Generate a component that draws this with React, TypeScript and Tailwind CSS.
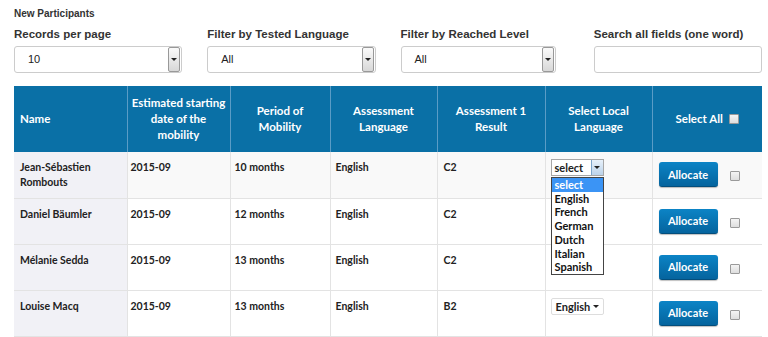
import React from "react";

const rows = [
  { name: "Jean-Sébastien Rombouts", date: "2015-09", period: "10 months", lang: "English", result: "C2", local: "open" },
  { name: "Daniel Bäumler", date: "2015-09", period: "12 months", lang: "English", result: "C2", local: "" },
  { name: "Mélanie Sedda", date: "2015-09", period: "13 months", lang: "English", result: "C2", local: "" },
  { name: "Louise Macq", date: "2015-09", period: "13 months", lang: "English", result: "B2", local: "English" },
];

const options = ["select", "English", "French", "German", "Dutch", "Italian", "Spanish"];

const FilterSelect = ({ value, className = "" }: { value: string; className?: string }) => (
  <div className={`h-[27px] bg-white border border-[#ccc] rounded-[3px] flex items-center pl-[13px] pr-[1px] ${className}`}>
    <span className="flex-1 text-[11px] text-[#222]">{value}</span>
    <span className="w-[12px] h-[25px] border border-[#999] rounded-[2px] bg-gradient-to-b from-[#fafafa] to-[#d8d8d8] flex items-center justify-center">
      <span className="w-0 h-0 border-l-[3px] border-r-[3px] border-t-[3px] border-l-transparent border-r-transparent border-t-[#222]" />
    </span>
  </div>
);

const Checkbox = () => (
  <span className="inline-block w-[10px] h-[10px] border border-[#9a9a9a] bg-gradient-to-b from-[#f4f4f4] to-[#dedede] rounded-[1px]" />
);

export default function App() {
  return (
    <div className="w-[768px] h-[337px] overflow-hidden bg-white pl-[14px] pr-[6px] pt-[8px]" style={{ fontFamily: "'Liberation Sans', Arial, sans-serif" }}>
      <div className="text-[10px] font-bold text-[#333] leading-[12px]">New Participants</div>
      <div className="grid grid-cols-4 gap-x-[25px] mt-[7px]">
        <div>
          <div className="text-[11.5px] font-bold text-[#333] leading-[14px]">Records per page</div>
          <FilterSelect value="10" className="mt-[5px]" />
        </div>
        <div>
          <div className="text-[11.5px] font-bold text-[#333] leading-[14px]">Filter by Tested Language</div>
          <FilterSelect value="All" className="mt-[5px]" />
        </div>
        <div>
          <div className="text-[11.5px] font-bold text-[#333] leading-[14px]">Filter by Reached Level</div>
          <FilterSelect value="All" className="mt-[5px] w-[155px]" />
        </div>
        <div>
          <div className="text-[11.5px] font-bold text-[#333] leading-[14px]">Search all fields (one word)</div>
          <div className="mt-[5px] h-[27px] bg-white border border-[#ccc] rounded-[3px]" />
        </div>
      </div>

      <table className="mt-[13px] w-[748px] table-fixed border-collapse text-[#222]" style={{ fontFamily: "Lato, 'Open Sans', sans-serif" }}>
        <colgroup>
          <col className="w-[113px]" />
          <col className="w-[103px]" />
          <col className="w-[100px]" />
          <col className="w-[107px]" />
          <col className="w-[108px]" />
          <col className="w-[107px]" />
          <col className="w-[110px]" />
        </colgroup>
        <thead>
          <tr className="h-[66px] bg-[#0a70a6] text-white text-[11.5px] font-bold leading-[16px]">
            <th className="text-left pl-[6px] border-r border-[#5a9cc6]">Name</th>
            <th className="border-r border-[#5a9cc6] px-[1px]">Estimated starting<br />date of the<br />mobility</th>
            <th className="border-r border-[#5a9cc6] px-[8px]">Period of<br />Mobility</th>
            <th className="border-r border-[#5a9cc6] px-[10px]">Assessment<br />Language</th>
            <th className="border-r border-[#5a9cc6] px-[8px]">Assessment 1<br />Result</th>
            <th className="border-r border-[#5a9cc6] px-[8px]">Select Local<br />Language</th>
            <th>
              <span className="inline-flex items-center gap-[6px]">
                Select All <Checkbox />
              </span>
            </th>
          </tr>
        </thead>
        <tbody className="text-[10.5px] font-bold leading-[15px]">
          {rows.map((r, i) => (
            <tr key={i} className={`h-[46px] border-b border-[#e3e3e3] align-top ${i === 0 ? "bg-[#f9f9f9]" : "bg-white"}`}>
              <td className="bg-[#f1f1f6] pl-[6px] pr-[10px] pt-[8px] border-r border-[#e3e3e3]">{r.name}</td>
              <td className="pl-[3px] pt-[8px] border-r border-[#e3e3e3]">{r.date}</td>
              <td className="pl-[4px] pt-[8px] border-r border-[#e3e3e3]">{r.period}</td>
              <td className="pl-[5px] pt-[8px] border-r border-[#e3e3e3]">{r.lang}</td>
              <td className="pl-[6px] pt-[8px] border-r border-[#e3e3e3]">{r.result}</td>
              <td className="pl-[5px] pt-[7px] border-r border-[#e3e3e3] relative">
                {r.local === "open" && (
                  <div className="relative w-[53px]">
                    <div className="h-[17px] bg-white border border-[#a7a7a7] flex items-center pl-[3px] text-[11px]">
                      <span className="flex-1">select</span>
                      <span className="w-[12px] h-[15px] border-l border-[#7ea6cc] bg-gradient-to-b from-[#e8f1fa] to-[#bcd3ea] flex items-center justify-center">
                        <span className="w-0 h-0 border-l-[3px] border-r-[3px] border-t-[3px] border-l-transparent border-r-transparent border-t-[#222]" />
                      </span>
                    </div>
                    <div className="absolute left-0 top-[18px] w-[53px] bg-white border border-[#444] z-10 text-[11px] leading-[13.7px]">
                      {options.map((o, j) => (
                        <div key={o} className={`pl-[3px] ${j === 0 ? "bg-[#3b94f5] text-white" : "text-[#111]"}`}>{o}</div>
                      ))}
                    </div>
                  </div>
                )}
                {r.local === "English" && (
                  <div className="w-[53px] h-[17px] border border-[#ddd] rounded-[2px] bg-white flex items-center pl-[4px] text-[11px] mt-[0px]">
                    <span className="flex-1">English</span>
                    <span className="mr-[4px] w-0 h-0 border-l-[3px] border-r-[3px] border-t-[3px] border-l-transparent border-r-transparent border-t-[#222]" />
                  </div>
                )}
              </td>
              <td className="pl-[6px] pt-[10px]">
                <div className="flex items-center">
                  <button className="w-[59px] h-[25px] rounded-[3px] bg-gradient-to-b from-[#0c84c6] to-[#05649e] border-b border-[#044e7c] text-white text-[11px] font-bold shadow-[0_1px_1px_rgba(0,0,0,0.25)]">
                    Allocate
                  </button>
                  <span className="ml-[12px] mt-[3px] flex">
                    <Checkbox />
                  </span>
                </div>
              </td>
            </tr>
          ))}
        </tbody>
      </table>
    </div>
  );
}
